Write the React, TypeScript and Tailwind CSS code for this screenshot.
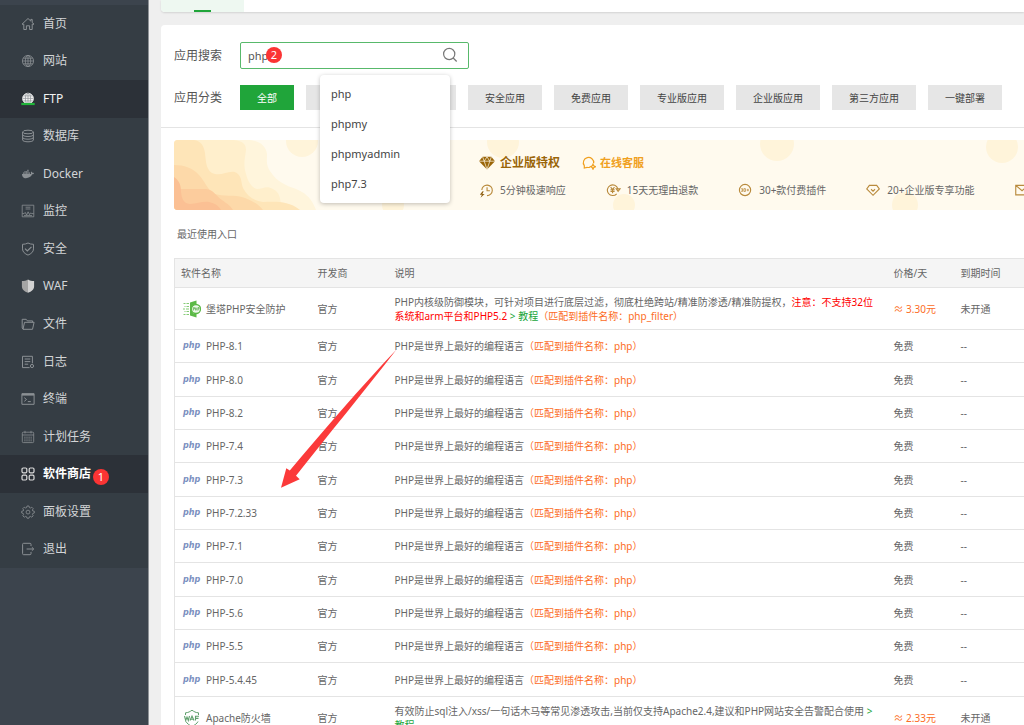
import React from "react";
import { FaDocker } from "react-icons/fa";

type IconProps = { children: React.ReactNode; width?: number };

function Stroke({ children, width = 1 }: IconProps) {
  return (
    <svg viewBox="0 0 14 14" className="size-3.5" fill="none" stroke="currentColor" strokeWidth={width} aria-hidden="true">
      {children}
    </svg>
  );
}

const HomeIcon = (
  <Stroke>
    <path d="M1 7.2 7 1.5l2.8 2.6V2.4h1.4v3.1L13 7.2h-1.8v5.3H8.6V8.8H5.4v3.7H2.8V7.2z" />
  </Stroke>
);
const GlobeIcon = (
  <Stroke width={0.8}>
    <circle cx="7" cy="7" r="5.6" />
    <ellipse cx="7" cy="7" rx="2.7" ry="5.6" />
    <path d="M7 1.4v11.2M1.4 7h11.2M2.2 4.2h9.6M2.2 9.8h9.6" />
  </Stroke>
);
const FtpIcon = (
  <Stroke width={0.9}>
    <circle cx="7" cy="6.6" r="5.4" fill="#f4f4f4" stroke="#e8e8e8" />
    <g stroke="#7d8388" strokeWidth="0.6">
      <ellipse cx="7" cy="6.6" rx="2.6" ry="5.2" />
      <path d="M7 1.4v10M1.8 6.4h10.4M2.6 3.9h8.8M2.4 8.9h9.2" />
    </g>
    <path d="M.3 12h13.400" stroke="#20b53a" strokeWidth="2.2" />
  </Stroke>
);
const DatabaseIcon = (
  <Stroke>
    <ellipse cx="7" cy="3" rx="5.4" ry="1.8" />
    <path d="M1.6 3v8c0 1 2.4 1.8 5.4 1.8s5.4-.8 5.4-1.8V3M1.6 5.7c0 1 2.4 1.8 5.4 1.8s5.4-.8 5.4-1.8M1.6 8.4c0 1 2.4 1.8 5.4 1.8s5.4-.8 5.4-1.8" />
  </Stroke>
);
const MonitorIcon = (
  <Stroke width={0.8}>
    <path d="M1.2 1.2h11.6v11.6H1.2z" />
    <path d="M4.6 3.2h4.8M4.6 5h4.8M1.4 9.6h1.8l1-1.2 1.4 2.6 1.5-3.2 1.4 2.8 1.3-1.8.8.8h2M3 11.6h8" />
  </Stroke>
);
const SafeIcon = (
  <Stroke>
    <path d="M7 1c1.6.9 3.5 1.3 5.5 1.3v4.6c0 3-2.5 5-5.5 6.2-3-1.2-5.5-3.2-5.5-6.2V2.3C3.500 2.300 5.400 1.900 7 1z" />
    <path d="M4 6.7 6.3 9l4.2-4.2" strokeWidth="1.2" />
  </Stroke>
);
const WafIcon = (
  <svg viewBox="0 0 14 14" className="size-3.5" aria-hidden="true">
    <path d="M7 .4C5.3 1.5 3.2 2 .9 2v5.5c0 3 2.5 4.900 6.100 6.300z" fill="#a5a5a5" />
    <path d="M7 .4C8.7 1.5 10.8 2 13.1 2v5.5c0 3-2.5 4.900-6.100 6.300z" fill="#d2d2d2" />
  </svg>
);
const FolderIcon = (
  <Stroke>
    <path d="M2.2 12.2 1.2 11V2.3h4l1.2 1.6h5.2v1.4M2 12.3h9.5l1.6-7H3.5z" />
  </Stroke>
);
const LogIcon = (
  <Stroke>
    <path d="M8.6 12.6H1.5V1.3h9.9v7M3.7 4h5.6M3.7 6.6h5.6M3.7 9.2h3.5" />
    <circle cx="11" cy="11" r="1.6" />
  </Stroke>
);
const TerminalIcon = (
  <Stroke>
    <path d="M.9 1.7h12.2v10.6H.9zM.9 3h12.2M3.3 5.7l2.2 1.8-2.2 1.8M6.8 9.6h3" />
    <path d="M1 2.4h12" strokeWidth="1.6" />
  </Stroke>
);
const CalendarIcon = (
  <Stroke width={0.8}>
    <rect x="1.3" y="2.2" width="11.4" height="10.4" rx="1" />
    <path d="M1.3 5h11.4M4 .8v2.600M10 .8v2.600" />
    <path d="M3.2 7.2h7.6M3.2 9h7.6M3.2 10.8h7.6" strokeDasharray="1.4 .7" />
  </Stroke>
);
const StoreIcon = (
  <Stroke width={1.2}>
    <rect x="1" y="1" width="4.8" height="4.8" rx="1.2" />
    <rect x="8.2" y="1" width="4.8" height="4.8" rx="1.2" />
    <rect x="1" y="8.2" width="4.8" height="4.8" rx="1.2" />
    <rect x="8.2" y="8.2" width="4.8" height="4.8" rx="1.2" />
  </Stroke>
);
const GearIcon = (
  <Stroke width={0.8}>
    <path d="M6 1h2l.4 1.600 1 .4 1.400-.8 1.400 1.400-.8 1.400.4 1L13.300 6.200v1.800l-1.500.4-.4 1 .8 1.400-1.400 1.400-1.400-.8-1 .4L8 13.200H6l-.4-1.400-1-.4-1.400.8-1.400-1.400.8-1.400-.4-1L.7 8V6.200l1.500-.2.4-1-.8-1.400 1.400-1.400 1.400.8 1-.4z" />
    <circle cx="7" cy="7.100" r="1.900" />
  </Stroke>
);
const LogoutIcon = (
  <Stroke>
    <path d="M10 4V2.300a1 1 0 0 0-1-1H2.600a1 1 0 0 0-1 1v9.400a1 1 0 0 0 1 1H9a1 1 0 0 0 1-1V10M5.600 7h7M10.800 5.200 12.700 7l-1.900 1.800" />
  </Stroke>
);

type NavItem = { label: string; icon: React.ReactNode; state?: "hover" | "current"; badge?: string };

const nav: NavItem[] = [
  { label: "首页", icon: HomeIcon },
  { label: "网站", icon: GlobeIcon },
  { label: "FTP", icon: FtpIcon, state: "hover" },
  { label: "数据库", icon: DatabaseIcon },
  { label: "Docker", icon: <FaDocker className="size-3.5 p-px" aria-hidden="true" /> },
  { label: "监控", icon: MonitorIcon },
  { label: "安全", icon: SafeIcon },
  { label: "WAF", icon: WafIcon },
  { label: "文件", icon: FolderIcon },
  { label: "日志", icon: LogIcon },
  { label: "终端", icon: TerminalIcon },
  { label: "计划任务", icon: CalendarIcon },
  { label: "软件商店", icon: StoreIcon, state: "current", badge: "1" },
  { label: "面板设置", icon: GearIcon },
  { label: "退出", icon: LogoutIcon },
];

const navTone = {
  normal: "text-[#d3d5d7]",
  hover: "bg-[#2c3138] text-[#f2f2f2]",
  current: "bg-[#2c3138] font-bold text-white",
};

function Badge({ children }: { children: React.ReactNode }) {
  return (
    <span className="flex size-4 items-center justify-center rounded-full bg-[#fb3434] text-[11px] leading-4 font-normal text-white">
      {children}
    </span>
  );
}

function Sidebar() {
  return (
    <aside className="w-[149px] shrink-0 border-r border-[#8f9397] bg-[#3c444d] pt-[5px]">
      <nav>
        <ul className="grid h-[563px] auto-rows-fr bg-[#353d44]">
          {nav.map((item) => (
            <li key={item.label} className="flex">
              <a href="#" className={`flex w-full items-center gap-2 pl-[21px] text-[12px] leading-4 ${navTone[item.state ?? "normal"]}`}>
                <span className={item.state === "current" ? "text-[#dcdcdc]" : "text-[#8b9094]"}>{item.icon}</span>
                <span>{item.label}</span>
                {item.badge && (
                  <span className="-ml-1.5 pt-1.5">
                    <Badge>{item.badge}</Badge>
                  </span>
                )}
              </a>
            </li>
          ))}
        </ul>
      </nav>
    </aside>
  );
}

const categories = ["全部", "已安装", "运行环境", "安全应用", "免费应用", "专业版应用", "企业版应用", "第三方应用", "一键部署"];
const suggestions = ["php", "phpmy", "phpmyadmin", "php7.3"];

function Filters() {
  return (
    <div className="border-b border-[#e4e4e4] px-[13px] pt-[17px] pb-[17px] text-[12px] text-[#555]">
      <div className="flex items-center">
        <label htmlFor="app-search" className="w-[66px] shrink-0 leading-4">
          应用搜索
        </label>
        <div className="relative w-[229px]">
          <input
            id="app-search"
            type="text"
            defaultValue="php"
            className="block h-[27px] w-full rounded-xs border border-[#58b96b] bg-white pr-10 pl-[7px] text-[11px] leading-4 text-[#555] outline-none"
          />
          <span className="absolute top-[5px] left-[26px]">
            <Badge>2</Badge>
          </span>
          <svg viewBox="0 0 16 16" className="absolute top-[5px] right-[11px] size-4" fill="none" stroke="#777" strokeWidth="1.2" aria-hidden="true">
            <circle cx="7.2" cy="7" r="5.6" />
            <path d="m11.2 11 3.500 3.500" />
          </svg>
          <div className="absolute top-[33px] left-20 z-10 w-[130px]">
            <span className="absolute -top-1 left-3 size-[10px] rotate-45 bg-white" />
            <ul className="relative rounded-sm bg-white py-[4px] text-[11px] text-[#444] shadow-[0_1px_4px_rgba(0,0,0,0.25)]">
              {suggestions.map((s) => (
                <li key={s} className="px-[11px] leading-[30px]">
                  {s}
                </li>
              ))}
            </ul>
          </div>
        </div>
      </div>
      <div className="mt-4 flex items-center">
        <span className="w-[66px] shrink-0 leading-4">应用分类</span>
        <div className="flex gap-3">
          {categories.map((c, i) => (
            <button
              key={c}
              type="button"
              className={`h-[25px] shrink-0 px-[17px] text-[10px] leading-4 whitespace-nowrap ${i === 0 ? "bg-[#20a53a] text-white" : "bg-[#e6e6e6] text-[#444]"}`}
            >
              {c}
            </button>
          ))}
        </div>
      </div>
    </div>
  );
}

const gold = "#b98a3c";

const perks = [
  {
    text: "5分钟极速响应",
    icon: (
      <>
        <path d="M3 7.500A5.600 5.600 0 1 1 8.500 13.400M8.600 4.500v3.800h3" />
        <path d="M3.800 8.800.8 12.600h2.300L1.600 15.800 6 11.700H3.600L5 8.800z" fill="#8f5f10" stroke="none" />
      </>
    ),
  },
  {
    text: "15天无理由退款",
    icon: (
      <>
        <path d="M11.400 11.500A5.700 5.700 0 1 1 12.600 6M10.900 6.200h4l-2 2.600z" />
        <path d="m5 4.500 2 2.500 2-2.500M4.800 7.300h4.400M4.800 9.100h4.400M7 7v4" />
      </>
    ),
  },
  {
    text: "30+款付费插件",
    icon: (
      <>
        <circle cx="7.5" cy="7.5" r="6" />
        <path d="M3.400 6h1.500v3H3.400M3.600 7.500h1.200M6.300 6h1.600v3H6.300zM9.200 7.500h2.600M10.500 6.200v2.600" strokeWidth=".8" />
      </>
    ),
  },
  {
    text: "20+企业版专享功能",
    icon: (
      <>
        <path d="M3.600 2.500h7.800l2.800 3.800-6.700 6.800L.8 6.300z" />
        <path d="m5.400 6.700 2.100 2 2.100-2" />
      </>
    ),
  },
  {
    text: "专属企业服务群",
    icon: <path d="M.8 2.500h13.400v10.200H.8zM.8 2.500l6.700 5.800 6.700-5.800" />,
  },
];

function Banner() {
  return (
    <section className="relative h-[70px] overflow-hidden rounded-l-sm bg-[#fffaee]">
      <svg viewBox="0 0 850 70" className="absolute top-0 left-0 h-[70px] w-[850px]" aria-hidden="true">
        <g fill="#fff4da">
          <circle cx="128" cy="1" r="16" />
          <circle cx="219" cy="65" r="11" />
          <circle cx="329" cy="2" r="16" />
          <circle cx="450" cy="65" r="11" />
          <circle cx="603" cy="4" r="17" />
          <circle cx="731" cy="65" r="13" />
          <circle cx="828" cy="7" r="16" />
        </g>
        <path fill="#fff5dc" d="M0 0h73c11 0 19 5 20 14 0 8-1 10 3 17 4 6 8 10 14 13 7 4 12 4 18 8 7 4 11 10 14 18H0z" />
        <path fill="#ffefcc" d="M0 0h60c9 1 12 4 12 10-1 9-3 14 0 24 2 8 6 14 11 15 6 0 9-4 16 0 6 3 8 8 8 21H0z" />
        <path fill="#fee5b8" d="M0 0h20c7 1 10 6 11 13 1 9 1 19 10 21 8 2 17-6 23 0 4 4 3 9 5 14 4 8 11 13 20 14 12 0 24-2 37 8H0z" />
        <path fill="#fdd9a9" d="M0 25c10 0 19 3 25 10 6 6 8 15 16 19 8 3 19 0 30 4 7 3 14 6 18 12H0z" />
        <path fill="#fccc9d" d="M0 49h32c8 1 10 7 16 11 4 3 8 5 11 10H0z" />
        <path fill="#fbc094" d="M0 37c6 4 7 9 7 15 1 7 2 11 9 12 7 0 12-3 19-2 5 1 9 3 12 8H0z" />
      </svg>
      <div className="relative pl-[305px] pt-[14px]">
        <div className="flex items-center gap-[22px]">
          <h2 className="flex items-center gap-[5px] text-[12px] leading-[18px] font-bold whitespace-nowrap text-[#9a6508]">
            <svg viewBox="0 0 16 14" className="h-[14px] w-4" aria-hidden="true">
              <path d="M3.6.8h8.800L16 5.300 8 13.600 0 5.300z" fill="#9a6508" />
              <path d="M0 5.200h16M3.600.8l1.600 4.400L8 13.400l2.800-8.200L12.400.8M5.200 5.200 8 .8l2.800 4.400" fill="none" stroke="#fffaee" strokeWidth=".7" />
            </svg>
            企业版特权
          </h2>
          <a href="#" className="flex items-center gap-1 text-[11px] leading-[18px] font-bold whitespace-nowrap text-[#f0a020]">
            <svg viewBox="0 0 14 14" className="size-3.5" fill="none" stroke="#f0a020" strokeWidth="1.2" aria-hidden="true">
              <path d="M8 11.200c-1 .4-2 .4-3 .1L2.300 12V9.700A5.200 5.200 0 1 1 11.700 7.300" />
              <path d="m11 8.200.8 1.700 1.700.8-1.700.8-.8 1.700-.8-1.700-1.700-.8 1.700-.8z" />
            </svg>
            在线客服
          </a>
        </div>
        <ul className="mt-2 flex gap-10 text-[10px] leading-5 text-[#666]">
          {perks.map((p) => (
            <li key={p.text} className="flex shrink-0 items-center gap-[6px] whitespace-nowrap">
              <svg viewBox="0 0 16 16" className="size-[15px]" fill="none" stroke={gold} strokeWidth="1.2" aria-hidden="true">
                {p.icon}
              </svg>
              {p.text}
            </li>
          ))}
        </ul>
      </div>
    </section>
  );
}

const versions = ["8.1", "8.0", "8.2", "7.4", "7.3", "7.2.33", "7.1", "7.0", "5.6", "5.5", "5.4.45"];

function PhpLogo() {
  return (
    <span className="w-[18px] font-['DejaVu_Sans',sans-serif] text-[8px] leading-3 font-bold text-[#7a8fc0] italic">php</span>
  );
}

function GuardLogo() {
  return (
    <svg viewBox="0 0 18 18" className="h-[18px] w-[18px]" aria-hidden="true">
      <path d="M7 2.500 13.500.6v4.200a5 5 0 0 0-3 8.600L13.500 14v3.400L7 15.500z" fill="#5cb947" />
      <circle cx="13" cy="9" r="4.5" fill="#eef8ec" stroke="#5cb947" strokeWidth="1.3" />
      <path d="M10.500 10.500v-3h1v1.500h-1M12.500 7.500v3M13.900 7.500v3M12.500 9h1.400M15 10.500v-3h1v1.500h-1" fill="none" stroke="#4aa53a" strokeWidth=".6" />
      <path d="M.5 3.500h2M3.500 3.500h2.500M1.500 6.500h1M3.500 6.500h2.500M0 9h2M3 9h3M1.500 11.500h1M3.500 11.500h2.500M.5 14.500h2M3.500 14.500h2.500" stroke="#5cb947" strokeWidth="1" strokeOpacity=".75" />
    </svg>
  );
}

function WafLogo() {
  return (
    <svg viewBox="0 0 18 18" className="h-[18px] w-[18px]" fill="none" stroke="#5fa06c" aria-hidden="true">
      <path d="M2.500 6V3.800C5 3.800 7.300 2.500 9 1.200c1.700 1.300 4 2.600 6.500 2.600V6M3 12.500c1 2 3 3.600 6 4.800 3-1.200 5-2.800 6-4.800" strokeWidth="1" />
      <path d="m1.500 7 1.200 4.500L4 8l1.300 3.500L6.500 7M7 11.500 9 7l2 4.500M7.700 10.200h2.600M12.500 11.500V7.300H16M12.500 9.400h3" strokeWidth="1.1" />
    </svg>
  );
}

function Name({ logo, children }: { logo: React.ReactNode; children: React.ReactNode }) {
  return (
    <span className="flex items-center gap-[5px] pl-[2px] whitespace-nowrap">
      {logo}
      <span>{children}</span>
    </span>
  );
}

function SoftwareTable() {
  return (
    <table className="w-full min-w-[850px] table-fixed border-collapse border-l border-[#e4e4e4] text-left text-[10px] leading-[14px] text-[#666] [&_td]:px-[6px] [&_td]:py-0 [&_th]:px-[6px] [&_th]:font-normal [&_tr]:border-y [&_tr]:border-[#e4e4e4]">
      <colgroup>
        <col className="w-[137px]" />
        <col className="w-[77px]" />
        <col className="w-[499px]" />
        <col className="w-[67px]" />
        <col />
      </colgroup>
      <thead>
        <tr className="h-[29px] bg-[#f5f5f5]">
          <th>软件名称</th>
          <th>开发商</th>
          <th>说明</th>
          <th>价格/天</th>
          <th>到期时间</th>
        </tr>
      </thead>
      <tbody>
        <tr className="h-[42px]">
          <td>
            <Name logo={<GuardLogo />}>堡塔PHP安全防护</Name>
          </td>
          <td>官方</td>
          <td>
            PHP内核级防御模块，可针对项目进行底层过滤，彻底杜绝跨站/精准防渗透/精准防提权，
            <span className="text-[#ff0000]">注意：不支持32位系统和arm平台和PHP5.2</span>
            <a href="#" className="text-[#20a53a]"> &gt; 教程</a>
            <span className="text-[#fc6d26]">（匹配到插件名称：php_filter）</span>
          </td>
          <td className="text-[#fc6d26]">≈ 3.30元</td>
          <td>未开通</td>
        </tr>
        {versions.map((v, i) => (
          <tr key={v} className={i % 3 === 1 ? "h-[34px]" : "h-[33px]"}>
            <td>
              <Name logo={<PhpLogo />}>PHP-{v}</Name>
            </td>
            <td>官方</td>
            <td>
              PHP是世界上最好的编程语言<span className="text-[#fc6d26]">（匹配到插件名称：php）</span>
            </td>
            <td>免费</td>
            <td>--</td>
          </tr>
        ))}
        <tr className="h-[42px]">
          <td>
            <Name logo={<WafLogo />}>Apache防火墙</Name>
          </td>
          <td>官方</td>
          <td>
            有效防止sql注入/xss/一句话木马等常见渗透攻击,当前仅支持Apache2.4,建议和PHP网站安全告警配合使用
            <a href="#" className="text-[#20a53a]"> &gt; 教程</a>
          </td>
          <td className="text-[#fc6d26]">≈ 2.33元</td>
          <td>未开通</td>
        </tr>
      </tbody>
    </table>
  );
}

export default function App() {
  return (
    <div className="flex h-screen overflow-hidden bg-[#efefef] font-['Noto_Sans','Noto_Sans_CJK_SC',sans-serif]">
      <Sidebar />
      <main className="relative min-w-0 flex-1 overflow-hidden pl-3">
        <div className="flex h-3 rounded-bl-sm bg-white shadow-[0_1px_2px_rgba(0,0,0,0.12)]">
          <div className="flex w-[83px] items-end justify-center rounded-bl-sm bg-[#eef8f1]">
            <span className="h-[2px] w-[17px] bg-[#20a53a]" />
          </div>
        </div>
        <div className="mt-[13px] rounded-tl-sm bg-white">
          <Filters />
          <div className="pt-3 pl-[13px]">
            <Banner />
            <p className="mt-4 mb-4 pl-[3px] text-[10px] leading-4 text-[#666]">最近使用入口</p>
            <SoftwareTable />
          </div>
        </div>
        <svg viewBox="0 0 116 139" className="pointer-events-none absolute top-[349px] left-[132px] h-[139px] w-[116px]" aria-hidden="true">
          <path d="M115.500.5C80 38 42 82 8.800 121.500L5.300 119.300 0 138.800l18.700-8.500-3.700-3.600C47 86 82 44 115.500.5z" fill="#fb3a3a" />
        </svg>
      </main>
    </div>
  );
}
